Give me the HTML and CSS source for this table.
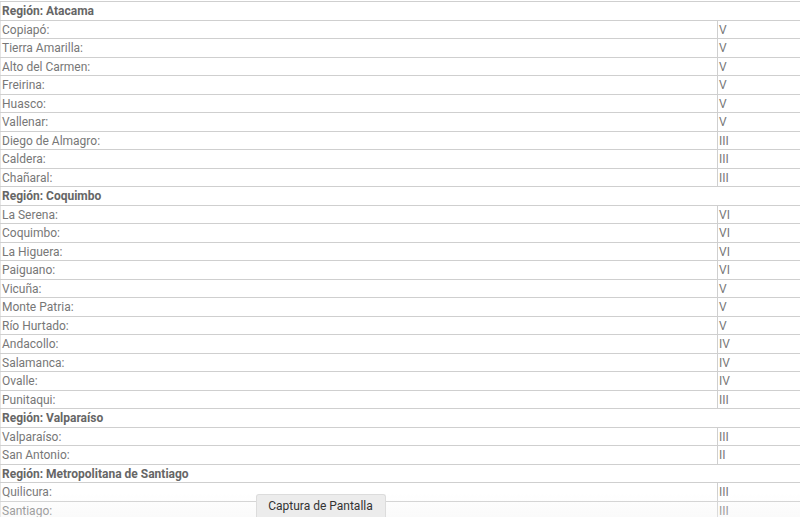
FILE: index.html
```html
<!DOCTYPE html>
<html lang="es">
<head>
  <meta charset="UTF-8">
  <title>Comunas por región</title>
  <link rel="stylesheet" href="styles.css">
</head>
<body>
  <table class="comunas">
    <tr class="region"><td colspan="2">Región: Atacama</td></tr>
    <tr><td>Copiapó:</td><td>V</td></tr>
    <tr><td>Tierra Amarilla:</td><td>V</td></tr>
    <tr><td>Alto del Carmen:</td><td>V</td></tr>
    <tr><td>Freirina:</td><td>V</td></tr>
    <tr><td>Huasco:</td><td>V</td></tr>
    <tr><td>Vallenar:</td><td>V</td></tr>
    <tr><td>Diego de Almagro:</td><td>III</td></tr>
    <tr><td>Caldera:</td><td>III</td></tr>
    <tr><td>Chañaral:</td><td>III</td></tr>
    <tr class="region"><td colspan="2">Región: Coquimbo</td></tr>
    <tr><td>La Serena:</td><td>VI</td></tr>
    <tr><td>Coquimbo:</td><td>VI</td></tr>
    <tr><td>La Higuera:</td><td>VI</td></tr>
    <tr><td>Paiguano:</td><td>VI</td></tr>
    <tr><td>Vicuña:</td><td>V</td></tr>
    <tr><td>Monte Patria:</td><td>V</td></tr>
    <tr><td>Río Hurtado:</td><td>V</td></tr>
    <tr><td>Andacollo:</td><td>IV</td></tr>
    <tr><td>Salamanca:</td><td>IV</td></tr>
    <tr><td>Ovalle:</td><td>IV</td></tr>
    <tr><td>Punitaqui:</td><td>III</td></tr>
    <tr class="region"><td colspan="2">Región: Valparaíso</td></tr>
    <tr><td>Valparaíso:</td><td>III</td></tr>
    <tr><td>San Antonio:</td><td>II</td></tr>
    <tr class="region"><td colspan="2">Región: Metropolitana de Santiago</td></tr>
    <tr><td>Quilicura:</td><td>III</td></tr>
    <tr><td>Santiago:</td><td>III</td></tr>
  </table>

  <div class="footer">
    <button type="button">Captura de Pantalla</button>
  </div>
</body>
</html>
```

FILE: styles.css
```css
/* Basic resets */
* {
  margin: 0;
  padding: 0;
  box-sizing: border-box;
}
html, body {
  background: #fff;
  overflow: hidden;
}
body {
  padding-top: 1px;
  font-family: Roboto, "Liberation Sans", Arial, sans-serif;
  font-size: 12px;
  color: #777;
}
/* Table */
.comunas {
  width: 100%;
  border-collapse: collapse;
}
.comunas td {
  height: 18.5px;
  padding: 1px 1px 0;
  line-height: 16px;
  border-top: 1px solid #cfcfcf;
  border-bottom: 1px solid #cfcfcf;
  vertical-align: middle;
  white-space: nowrap;
}
.comunas td:first-child {
  width: 717px;
  border-left: 1px solid #e4e4e4;
}
.comunas td + td {
  border-left: 1px solid #cfcfcf;
}
.comunas .region td {
  font-weight: bold;
  color: #666;
}
/* Bottom bar */
.footer {
  position: fixed;
  left: 0;
  right: 0;
  bottom: 0;
  height: 23px;
  display: flex;
  justify-content: center;
  padding-right: 159px;
  background: linear-gradient(rgba(255,255,255,0.05), rgba(242,242,242,0.4));
}
.footer button {
  width: 130px;
  height: 23px;
  border: 1px solid #dcdcdc;
  border-bottom: none;
  border-radius: 3px 3px 0 0;
  background: #ececec;
  color: #333;
  font-family: Roboto, "Liberation Sans", Arial, sans-serif;
  font-size: 12px;
  cursor: pointer;
}
```
